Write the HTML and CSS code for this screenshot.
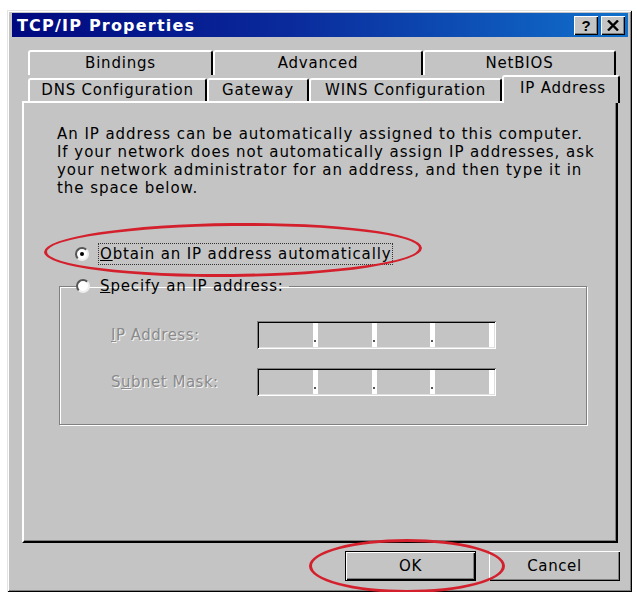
FILE: index.html
```html
<!DOCTYPE html>
<html lang="en">
<head>
    <meta charset="UTF-8">
    <meta name="viewport" content="width=device-width, initial-scale=1.0">
    <title>TCP/IP Properties</title>
    <link rel="stylesheet" href="styles.css">
</head>
<body>
    <div class="window">
        <!-- Title bar -->
        <div class="titlebar">
            <span class="title">TCP/IP Properties</span>
            <div class="title-buttons">
                <span class="title-btn help">?</span>
                <span class="title-btn close">
                    <svg width="12" height="11" viewBox="0 0 12 11">
                        <path d="M1 0.5 L11 10.5 M11 0.5 L1 10.5" stroke="#000" stroke-width="2.4" fill="none"/>
                    </svg>
                </span>
            </div>
        </div>

        <div class="dialog-body">
            <!-- Tabs -->
            <div class="tabs">
                <div class="tab-row back">
                    <div class="tab tab-bindings">Bindings</div>
                    <div class="tab tab-advanced">Advanced</div>
                    <div class="tab tab-netbios">NetBIOS</div>
                </div>
                <div class="tab-row front">
                    <div class="tab tab-dns">DNS Configuration</div>
                    <div class="tab tab-gateway">Gateway</div>
                    <div class="tab tab-wins">WINS Configuration</div>
                    <div class="tab tab-ip active">IP Address</div>
                </div>
            </div>

            <!-- Tab page -->
            <div class="panel">
                <p class="intro">An IP address can be automatically assigned to this computer.<br>
                    If your network does not automatically assign IP addresses, ask<br>
                    your network administrator for an address, and then type it in<br>
                    the space below.</p>

                <div class="radio-row">
                    <span class="radio checked"></span>
                    <span class="radio-label focused"><u>O</u>btain an IP address automatically</span>
                </div>

                <fieldset class="group">
                    <legend class="radio-row">
                        <span class="radio"></span>
                        <span class="radio-label"><u>S</u>pecify an IP address:</span>
                    </legend>
                    <div class="ip-rows">
                        <span class="disabled-label"><u>I</u>P Address:</span>
                        <div class="ip-field">
                            <span class="octet"></span>
                            <span class="octet"></span>
                            <span class="octet"></span>
                            <span class="octet last"></span>
                        </div>
                        <span class="disabled-label">S<u>u</u>bnet Mask:</span>
                        <div class="ip-field">
                            <span class="octet"></span>
                            <span class="octet"></span>
                            <span class="octet"></span>
                            <span class="octet last"></span>
                        </div>
                    </div>
                </fieldset>
            </div>

            <!-- Dialog buttons -->
            <div class="buttons">
                <button class="btn default">OK</button>
                <button class="btn">Cancel</button>
            </div>
        </div>

        <!-- Red marker circles -->
        <span class="marker marker-obtain"></span>
        <span class="marker marker-ok"></span>
    </div>
</body>
</html>
```

FILE: styles.css
```css
body {
    margin: 0;
    background: #fff;
    font-family: "DejaVu Sans", "Liberation Sans", sans-serif;
    font-size: 15px;
    color: #000;
}

.window {
    position: relative; /* markers sit on top of the dialog */
    box-sizing: border-box;
    width: 625px;
    height: 582px;
    margin: 10px 0 0 7px;
    padding: 3px 4px 0 5px;
    background: #c4c4c4;
    box-shadow: inset 1px 1px #e4e4e4, inset -1px -1px #000,
                inset 2px 2px #fff, inset -2px -2px #808080;
}

/* ---------- title bar ---------- */
.titlebar {
    height: 24px;
    display: flex;
    align-items: center;
    justify-content: space-between;
    padding: 0 3px 0 5px;
    background: linear-gradient(to right, #00087f 0%, #0a2a9c 45%, #1070cc 100%);
}

.title {
    color: #fff;
    font-family: "DejaVu Sans", sans-serif;
    font-weight: bold;
    font-size: 16px;
    letter-spacing: 1.2px;
}

.title-buttons {
    display: flex;
    gap: 3px;
}

.title-btn {
    box-sizing: border-box;
    width: 24px;
    height: 19px;
    display: flex;
    align-items: center;
    justify-content: center;
    background: #c4c4c4;
    box-shadow: inset 1px 1px #fff, inset -1px -1px #000, inset -2px -2px #808080;
}

.help {
    font-family: "Liberation Sans", Arial, sans-serif;
    font-weight: bold;
    font-size: 15px;
}

/* ---------- tabs ---------- */
.dialog-body {
    padding: 13px 0 0 10px;
}

.tabs {
    margin-left: 6px;
    width: 592px;
}

.tab-row {
    display: flex;
    align-items: flex-end;
}

.tab {
    box-sizing: border-box;
    text-align: center;
    letter-spacing: 0.8px;
    background: #c4c4c4;
    border-top: 2px solid #fff;
    border-left: 2px solid #fff;
    border-right: 2px solid #000;
    border-radius: 3px 3px 0 0;
}

.back .tab {
    height: 25px;
    line-height: 23px;
}

.front .tab {
    height: 23px;
    line-height: 21px;
}

.tab-bindings { width: 185px; }
.tab-advanced { width: 210px; }
.tab-netbios  { width: 193px; }

.tab-dns     { width: 179px; }
.tab-gateway { width: 102px; }
.tab-wins    { width: 193px; }

.front .tab.active {
    position: relative;
    z-index: 1;
    width: 118px;
    height: 28px;
    line-height: 22px;
    margin-bottom: -2px;
    margin-right: -6px;
    text-indent: 4px;
}

/* ---------- tab page ---------- */
.panel {
    box-sizing: border-box;
    width: 596px;
    height: 442px;
    padding: 22px 10px 0 33px;
    border-top: 2px solid #fff;
    border-left: 2px solid #fff;
    border-right: 2px solid #000;
    border-bottom: 2px solid #000;
    box-shadow: inset -1px -1px #808080;
}

.intro {
    margin: 0;
    line-height: 18px;
    letter-spacing: 0.95px;
    white-space: nowrap;
}

.radio-row {
    display: flex;
    align-items: center;
    gap: 9px;
    height: 22px;
}

.panel > .radio-row {
    margin: 46px 0 0 18px;
}

.radio {
    box-sizing: border-box;
    position: relative;
    width: 14px;
    height: 14px;
    border-radius: 50%;
    background: #fff;
    border: 2px solid;
    border-color: #555 #eee #eee #555;
}

.radio.checked::after {
    content: "";
    position: absolute;
    left: 3px;
    top: 3px;
    width: 4px;
    height: 4px;
    border-radius: 50%;
    background: #000;
}

.radio-label {
    letter-spacing: 0.85px;
    padding: 1px 1px;
}

.radio-label.focused {
    border: 1px dotted #333;
}

.group {
    margin: 10px 0 0 2px;
    width: 528px;
    height: 150px;
    box-sizing: border-box;
    padding: 0;
    border: 1px solid #808080;
    box-shadow: 1px 1px #fff, inset 1px 1px #fff;
}

.group legend {
    padding: 0 4px 0 0;
    margin-left: 16px;
}

.ip-rows {
    display: grid;
    grid-template-columns: 146px 239px;
    row-gap: 19px;
    align-items: center;
    margin: 24px 0 0 51px;
}

.disabled-label {
    color: #8a8a8a;
    text-shadow: 1px 1px #f4f4f4;
    letter-spacing: 0.5px;
}

.ip-field {
    box-sizing: border-box;
    height: 28px;
    display: flex;
    padding: 2px;
    background: #c4c4c4;
    box-shadow: inset 1px 1px #808080, inset -1px -1px #fff,
                inset 2px 2px #000, inset -2px -2px #dfdfdf;
}

.octet {
    position: relative;
    flex: 1;
    border-right: 5px solid #fff;
}

.octet::after {
    content: "";
    position: absolute;
    right: -3px;
    bottom: 5px;
    width: 2px;
    height: 2px;
    background: #555;
}

.octet.last::after {
    display: none;
}

/* ---------- OK / Cancel ---------- */
.buttons {
    display: flex;
    justify-content: flex-end;
    gap: 13px;
    width: 598px;
    margin-top: 8px;
}

.btn {
    box-sizing: border-box;
    width: 131px;
    height: 30px;
    font-family: "DejaVu Sans", "Liberation Sans", sans-serif;
    font-size: 15px;
    letter-spacing: 0.6px;
    background: #c4c4c4;
    border: none;
    box-shadow: inset 1px 1px #fff, inset -1px -1px #000, inset -2px -2px #808080;
}

.btn.default {
    box-shadow: inset 0 0 0 1px #000, inset 2px 2px #fff,
                inset -2px -2px #000, inset -3px -3px #808080;
}

/* ---------- hand-drawn red circles ---------- */
.marker {
    position: absolute;
    border: 3px solid #d4202c;
    border-radius: 50%;
}

.marker-obtain {
    left: 37px;
    top: 213px;
    width: 372px;
    height: 48px;
    transform: rotate(-0.6deg);
}

.marker-ok {
    left: 302px;
    top: 529px;
    width: 190px;
    height: 48px;
}
```
